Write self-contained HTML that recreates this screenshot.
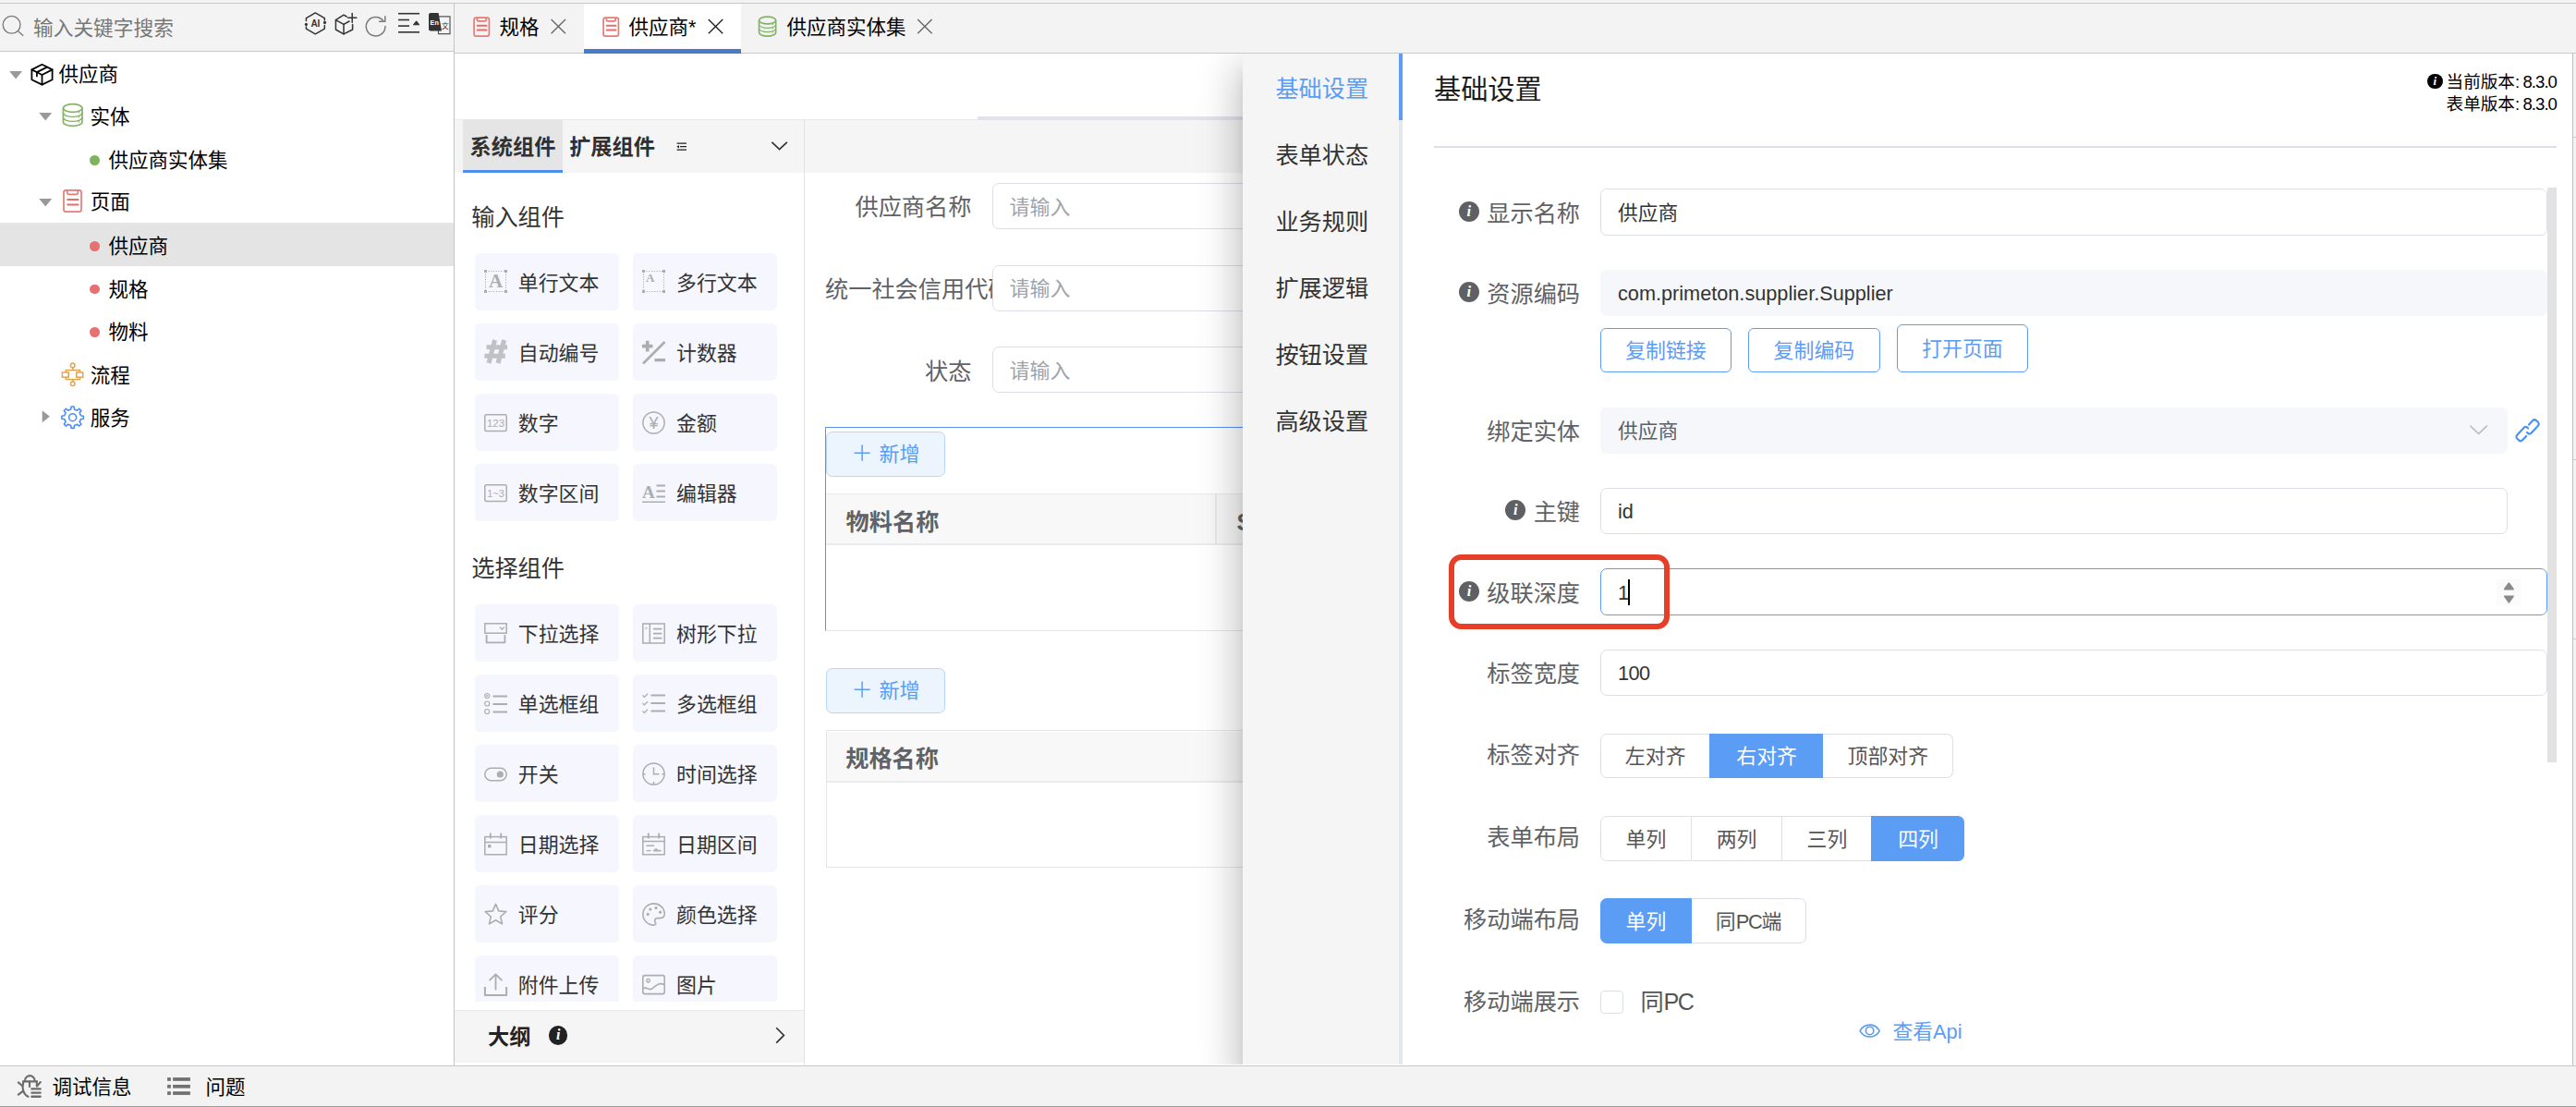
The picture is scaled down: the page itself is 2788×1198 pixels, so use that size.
<!DOCTYPE html>
<html lang="zh-CN">
<head>
<meta charset="utf-8">
<title>供应商</title>
<style>
*{box-sizing:border-box;margin:0;padding:0}
html,body{width:2788px;height:1198px;overflow:hidden;background:#fff}
body{position:relative;font-family:"Liberation Sans","Noto Sans CJK SC",sans-serif;font-size:21.5px;color:#000}
.a{position:absolute}
.t{position:absolute;white-space:nowrap}
svg{position:absolute;overflow:visible}
.card{position:absolute;width:156px;height:62px;background:#f5f6fe;border-radius:5.5px}
.inp{position:absolute;border:1.4px solid #dcdfe6;border-radius:7px;background:#fff}
.btn{position:absolute;border:1.5px solid #5b9cf5;border-radius:6px;background:#fff}
.seg{position:absolute;border:1.4px solid #dcdfe6;border-left-width:0;background:#fff}
.seg.f{border-left-width:1.4px;border-radius:7px 0 0 7px}
.seg.l{border-radius:0 7px 7px 0}
.seg.on{background:#5b9cf5;border-color:#5b9cf5}
.info{position:absolute;border-radius:50%;color:#fff;font-family:"Liberation Serif",serif;font-style:italic;font-weight:bold;text-align:center}
</style>
</head>
<body>
<!-- top strip -->
<div class="a" style="left:0;top:0;width:2788px;height:4px;background:#f3f3f3;border-bottom:1px solid #c8c8c8"></div>
<!-- left panel frame -->
<div class="a" style="left:0;top:4px;width:491px;height:52px;background:#f3f3f3;border-bottom:1px solid #c8c8c8"></div>
<div class="a" style="left:491px;top:4px;width:1px;height:1149px;background:#c4c4c4"></div>
<!-- tab bar -->
<div class="a" style="left:492px;top:4px;width:2296px;height:54px;background:#f3f3f3;border-bottom:1px solid #c8c8c8"></div>
<svg style="left:0px;top:0px;width:492px;height:56px;" viewBox="0 0 492 56" fill="none"><circle cx="12.6" cy="26.8" r="9.4" stroke="#7a7a7a" stroke-width="1.35"/><path d="M19.4 33.6L25.2 38.8" stroke="#7a7a7a" stroke-width="1.35"/><g stroke="#333" stroke-width="1.5" stroke-linecap="round" stroke-linejoin="round"><path d="M331.4 22.6V19.6L341.3 13.9L351.3 19.6V22"/><path d="M351.3 27.6V31.1L341.3 36.8L331.4 31.1V29"/></g><circle cx="331.4" cy="26.4" r="1.6" fill="#333"/><circle cx="351.5" cy="24.4" r="1.6" fill="#333"/><text x="341.4" y="29" font-size="10" font-weight="bold" fill="#333" text-anchor="middle" font-family="Liberation Sans,sans-serif">AI</text><g stroke="#333" stroke-width="1.5" stroke-linecap="round" stroke-linejoin="round"><path d="M375.2 18L372 16.2L363.4 21.6V32L372 36.8L381.6 32V26.6"/><path d="M363.4 21.6L372 26.4L378 23"/><path d="M372 26.4V36.8"/><path d="M376.6 19.2H385.8"/><path d="M381.2 14.4V24.2"/></g><g stroke="#7a7a7a" stroke-width="1.5" stroke-linecap="round" stroke-linejoin="round"><path d="M416.9 28.5A10.3 10.3 0 1 1 414.6 22.2"/><path d="M416.8 17.8V23.2H410.6"/></g><g stroke="#333" stroke-width="1.6"><path d="M431 14.7H454"/><path d="M431 21.5H443"/><path d="M431 28.1H443"/><path d="M431 34.8H454"/></g><path d="M447.4 26.8L450.6 22.8L453.8 26.8Z" fill="#333" stroke="#333" stroke-width="1" stroke-linejoin="round"/><path d="M474.5 17.8H487V36.6H474.5Z" stroke="#555" stroke-width="1.2" fill="#f3f3f3"/><path d="M466 14H474.6L478 33.6H466A2 2 0 0 1 464 31.6V16A2 2 0 0 1 466 14Z" fill="#333"/><text x="470.2" y="26.6" font-size="7.2" font-weight="bold" fill="#fff" text-anchor="middle" font-family="Liberation Sans,sans-serif">En</text><text x="481.8" y="30.6" font-size="7.6" fill="#333" text-anchor="middle" font-family="Noto Sans CJK SC,sans-serif">文</text></svg>
<div class="t " style="top:16.20px;font-size:21.7px;line-height:30px;height:30px;left:36.00px;color:#777;">输入关键字搜索</div>
<div class="a" style="left:0px;top:241.2px;width:491px;height:46.4px;background:#e4e4e4"></div>
<svg style="left:0px;top:56px;width:492px;height:440px;" viewBox="0 56 492 440" fill="none"><path d="M10.2 77h13.8l-6.9 8.4z" fill="#999"/><g stroke="#000" stroke-width="1.75" stroke-linejoin="round" stroke-linecap="round"><path d="M45.5 69.8L56.6 75.4V86.2L45.5 91.6L34.4 86.2V75.4Z"/><path d="M34.4 75.4L45.5 81L56.6 75.4"/><path d="M45.5 81V91.6"/><path d="M51 72.6L39.9 78.1V82.4"/></g><path d="M42.3 122h13.8l-6.9 8.4z" fill="#999"/><g transform="translate(78.7 112.2) scale(1) translate(-78.7 -112.2)"><g stroke="#82b366" stroke-width="1.65"><ellipse cx="78.7" cy="117.0" rx="10.3" ry="4.4"/><path d="M68.4 117.0V132.0A10.3 4.4 0 0 0 89.0 132.0V117.0"/><path d="M68.4 122.0A10.3 4.4 0 0 0 89.0 122.0" stroke-width="1.32"/><path d="M68.4 127.0A10.3 4.4 0 0 0 89.0 127.0" stroke-width="1.32"/></g><circle cx="85.3" cy="121.8" r="0.8" fill="#82b366"/><circle cx="85.3" cy="126.8" r="0.8" fill="#82b366"/><circle cx="85.3" cy="131.8" r="0.8" fill="#82b366"/></g><path d="M42.3 215h13.8l-6.9 8.4z" fill="#999"/><g transform="translate(68.2 205.1) scale(1) translate(-68.2 -205.1)"><rect x="69.0" y="205.9" width="19" height="23.2" rx="2.4" stroke="#e87a76" stroke-width="1.70"/><path d="M72.8 205.9V208.7A1.6 1.6 0 0 0 74.4 210.29999999999998H82.60000000000001A1.6 1.6 0 0 0 84.2 208.7V205.9" stroke="#e87a76" stroke-width="1.70"/><path d="M73.2 216.1H84.6M73.2 221.6H84.6" stroke="#e86c68" stroke-width="2.00" stroke-linecap="round"/></g><g stroke="#dea550" stroke-width="1.5"><circle cx="78.7" cy="395.4" r="2.3"/><circle cx="78.7" cy="415.3" r="2.3"/><path d="M78.7 397.7V400.6M78.7 413V410.6"/><rect x="71.3" y="400.6" width="15.2" height="10"/><rect x="67.4" y="403" width="6.8" height="5.2" fill="#fff"/><rect x="82.8" y="403" width="6.9" height="5.2" fill="#fff"/></g><path d="M45.7 444.2v13l8.2 -6.5z" fill="#999"/><path d="M76.71 442.90 L77.12 439.99 L80.08 439.99 L80.49 442.90 L83.48 444.14 L85.83 442.38 L87.92 444.47 L86.16 446.82 L87.40 449.81 L90.31 450.22 L90.31 453.18 L87.40 453.59 L86.16 456.58 L87.92 458.93 L85.83 461.02 L83.48 459.26 L80.49 460.50 L80.08 463.41 L77.12 463.41 L76.71 460.50 L73.72 459.26 L71.37 461.02 L69.28 458.93 L71.04 456.58 L69.80 453.59 L66.89 453.18 L66.89 450.22 L69.80 449.81 L71.04 446.82 L69.28 444.47 L71.37 442.38 L73.72 444.14Z" stroke="#4b8ef5" stroke-width="1.6" stroke-linejoin="round"/><circle cx="78.6" cy="451.7" r="4" stroke="#4b8ef5" stroke-width="1.6"/></svg>
<div class="a" style="left:97px;top:168.0px;width:10.8px;height:10.8px;border-radius:50%;background:#7fb45e"></div>
<div class="a" style="left:97px;top:261.0px;width:10.8px;height:10.8px;border-radius:50%;background:#e87070"></div>
<div class="a" style="left:97px;top:307.5px;width:10.8px;height:10.8px;border-radius:50%;background:#e87070"></div>
<div class="a" style="left:97px;top:354.0px;width:10.8px;height:10.8px;border-radius:50%;background:#e87070"></div>
<div class="t " style="top:66.20px;font-size:21.5px;line-height:30px;height:30px;left:63.60px;">供应商</div>
<div class="t " style="top:111.70px;font-size:21.5px;line-height:30px;height:30px;left:97.60px;">实体</div>
<div class="t " style="top:158.70px;font-size:21.5px;line-height:30px;height:30px;left:117.40px;">供应商实体集</div>
<div class="t " style="top:204.20px;font-size:21.5px;line-height:30px;height:30px;left:97.80px;">页面</div>
<div class="t " style="top:251.60px;font-size:21.5px;line-height:30px;height:30px;left:117.40px;">供应商</div>
<div class="t " style="top:298.70px;font-size:21.5px;line-height:30px;height:30px;left:117.40px;">规格</div>
<div class="t " style="top:345.20px;font-size:21.5px;line-height:30px;height:30px;left:117.40px;">物料</div>
<div class="t " style="top:391.70px;font-size:21.5px;line-height:30px;height:30px;left:97.80px;">流程</div>
<div class="t " style="top:438.20px;font-size:21.5px;line-height:30px;height:30px;left:97.80px;">服务</div>
<div class="a" style="left:632px;top:4px;width:170px;height:53.5px;background:#fff"></div>
<div class="a" style="left:632px;top:53px;width:170px;height:4.5px;background:#4a7bc8"></div>
<svg style="left:492px;top:4px;width:560px;height:54px;" viewBox="492 4 560 54" fill="none"><g transform="translate(512.4 18.4) scale(0.86) translate(-512.4 -18.4)"><rect x="513.1999999999999" y="19.2" width="19" height="23.2" rx="2.4" stroke="#e87a76" stroke-width="1.98"/><path d="M517.0 19.2V22.0A1.6 1.6 0 0 0 518.6 23.599999999999998H526.8A1.6 1.6 0 0 0 528.4 22.0V19.2" stroke="#e87a76" stroke-width="1.98"/><path d="M517.4 29.4H528.8M517.4 34.9H528.8" stroke="#e86c68" stroke-width="2.33" stroke-linecap="round"/></g><path d="M596.6 20.900000000000002L612.0 36.300000000000004M612.0 20.900000000000002L596.6 36.300000000000004" stroke="#666" stroke-width="1.35"/><g transform="translate(652.4 18.4) scale(0.86) translate(-652.4 -18.4)"><rect x="653.1999999999999" y="19.2" width="19" height="23.2" rx="2.4" stroke="#e87a76" stroke-width="1.98"/><path d="M657.0 19.2V22.0A1.6 1.6 0 0 0 658.6 23.599999999999998H666.8A1.6 1.6 0 0 0 668.4 22.0V19.2" stroke="#e87a76" stroke-width="1.98"/><path d="M657.4 29.4H668.8M657.4 34.9H668.8" stroke="#e86c68" stroke-width="2.33" stroke-linecap="round"/></g><path d="M766.8 20.900000000000002L782.1999999999999 36.300000000000004M782.1999999999999 20.900000000000002L766.8 36.300000000000004" stroke="#222" stroke-width="1.35"/><g transform="translate(830.6 17.8) scale(0.88) translate(-830.6 -17.8)"><g stroke="#82b366" stroke-width="1.88"><ellipse cx="830.6" cy="22.6" rx="10.3" ry="4.4"/><path d="M820.3000000000001 22.6V37.6A10.3 4.4 0 0 0 840.9 37.6V22.6"/><path d="M820.3000000000001 27.6A10.3 4.4 0 0 0 840.9 27.6" stroke-width="1.32"/><path d="M820.3000000000001 32.6A10.3 4.4 0 0 0 840.9 32.6" stroke-width="1.32"/></g><circle cx="837.2" cy="27.4" r="0.8" fill="#82b366"/><circle cx="837.2" cy="32.4" r="0.8" fill="#82b366"/><circle cx="837.2" cy="37.400000000000006" r="0.8" fill="#82b366"/></g><path d="M993.2 20.900000000000002L1008.6 36.300000000000004M1008.6 20.900000000000002L993.2 36.300000000000004" stroke="#666" stroke-width="1.35"/></svg>
<div class="t " style="top:14.60px;font-size:21.5px;line-height:30px;height:30px;left:540.40px;">规格</div>
<div class="t " style="top:14.60px;font-size:21.5px;line-height:30px;height:30px;left:680.60px;">供应商*</div>
<div class="t " style="top:14.60px;font-size:21.5px;line-height:30px;height:30px;left:851.40px;">供应商实体集</div>
<div class="a" style="left:492px;top:129px;width:860px;height:58px;background:#f5f5f5;border-top:1px solid #ece6e9"></div>
<div class="a" style="left:1058px;top:126px;width:300px;height:4px;background:#e1e3ea"></div>
<div class="a" style="left:870px;top:129px;width:1.2px;height:1024px;background:#e2e2e2"></div>
<div class="a" style="left:501px;top:129.5px;width:108px;height:57.5px;background:#e5e5e5;border-bottom:3.4px solid #4b8ef0"></div>
<div class="t " style="top:143.80px;font-size:23.2px;line-height:30px;height:30px;left:508.60px;color:#303030;font-weight:bold;">系统组件</div>
<div class="t " style="top:143.80px;font-size:23.2px;line-height:30px;height:30px;left:616.20px;color:#303030;font-weight:bold;">扩展组件</div>
<svg style="left:492px;top:129px;width:380px;height:58px;" viewBox="492 129 380 58" fill="none"><g stroke="#222" stroke-width="1.3"><path d="M732.6 155.2H743M736 158.7H743M732.6 162.2H743"/></g><path d="M732.4 158.7L735 157V160.4Z" fill="#222"/><path d="M835.4 153.8L843.6 161.6L851.8 153.8" stroke="#333" stroke-width="1.7"/></svg>
<div class="t " style="top:220.00px;font-size:25.2px;line-height:30px;height:30px;left:510.20px;color:#333;">输入组件</div>
<div class="t " style="top:600.00px;font-size:25.2px;line-height:30px;height:30px;left:510.20px;color:#333;">选择组件</div>
<div class="card" style="left:514px;top:274px;height:62px;overflow:hidden"><svg viewBox="0 0 25 25" fill="none" style="left:10px;top:19px;width:25px;height:25px"><rect x="1.5" y="0.5" width="22" height="22" stroke="#adadad" stroke-width="1" stroke-dasharray="1.2 1.6"/><rect x="0" y="-1" width="3" height="3" fill="#adadad"/><rect x="22" y="-1" width="3" height="3" fill="#adadad"/><rect x="0" y="21" width="3" height="3" fill="#adadad"/><rect x="22" y="21" width="3" height="3" fill="#adadad"/><text x="12.5" y="18.2" font-family="Liberation Serif,serif" font-size="21" font-weight="bold" text-anchor="middle" fill="#adadad">A</text></svg><div class="t " style="top:17.80px;font-size:21.9px;line-height:30px;height:30px;left:46.80px;color:#333;">单行文本</div>
</div>
<div class="card" style="left:685.2px;top:274px;height:62px;overflow:hidden"><svg viewBox="0 0 25 25" fill="none" style="left:10px;top:19px;width:25px;height:25px"><rect x="1.5" y="0.5" width="22" height="22" stroke="#adadad" stroke-width="1" stroke-dasharray="1.2 1.6"/><rect x="0" y="-1" width="3" height="3" fill="#adadad"/><rect x="22" y="-1" width="3" height="3" fill="#adadad"/><rect x="0" y="21" width="3" height="3" fill="#adadad"/><rect x="22" y="21" width="3" height="3" fill="#adadad"/><text x="8.8" y="12.4" font-family="Liberation Serif,serif" font-size="13" font-weight="bold" text-anchor="middle" fill="#adadad">A</text></svg><div class="t " style="top:17.80px;font-size:21.9px;line-height:30px;height:30px;left:46.80px;color:#333;">多行文本</div>
</div>
<div class="card" style="left:514px;top:350px;height:62px;overflow:hidden"><svg viewBox="0 0 25 25" fill="none" style="left:10px;top:19px;width:25px;height:25px"><g stroke="#c0c1c5" stroke-width="5"><path d="M11.6 -1L5 24M21.6 -1L15 24"/><path d="M2.6 6.8H25M0.4 16.2H22.8"/></g></svg><div class="t " style="top:17.80px;font-size:21.9px;line-height:30px;height:30px;left:46.80px;color:#333;">自动编号</div>
</div>
<div class="card" style="left:685.2px;top:350px;height:62px;overflow:hidden"><svg viewBox="0 0 25 25" fill="none" style="left:10px;top:19px;width:25px;height:25px"><g stroke="#adadad"><path d="M0 5.6H11.4M5.7 -0.2V11.4" stroke-width="3.6"/><path d="M1 24.5L24.5 1" stroke-width="2.6"/><path d="M13.5 20.6H25" stroke-width="3.4"/></g></svg><div class="t " style="top:17.80px;font-size:21.9px;line-height:30px;height:30px;left:46.80px;color:#333;">计数器</div>
</div>
<div class="card" style="left:514px;top:426px;height:62px;overflow:hidden"><svg viewBox="0 0 25 25" fill="none" style="left:10px;top:19px;width:25px;height:25px"><rect x="0.8" y="3.8" width="23.4" height="17.8" rx="1.5" stroke="#adadad" stroke-width="1.5"/><text x="12.5" y="16.8" font-family="Liberation Sans,sans-serif" font-size="11.5" text-anchor="middle" fill="#adadad">123</text></svg><div class="t " style="top:17.80px;font-size:21.9px;line-height:30px;height:30px;left:46.80px;color:#333;">数字</div>
</div>
<div class="card" style="left:685.2px;top:426px;height:62px;overflow:hidden"><svg viewBox="0 0 25 25" fill="none" style="left:10px;top:19px;width:25px;height:25px"><circle cx="12.5" cy="12.5" r="11.6" stroke="#adadad" stroke-width="1.5"/><text x="12.5" y="19" font-family="Liberation Sans,sans-serif" font-size="18" text-anchor="middle" fill="#adadad">¥</text></svg><div class="t " style="top:17.80px;font-size:21.9px;line-height:30px;height:30px;left:46.80px;color:#333;">金额</div>
</div>
<div class="card" style="left:514px;top:502px;height:62px;overflow:hidden"><svg viewBox="0 0 25 25" fill="none" style="left:10px;top:19px;width:25px;height:25px"><rect x="0.8" y="3.8" width="23.4" height="17.8" rx="1.5" stroke="#adadad" stroke-width="1.5"/><text x="12.5" y="16.6" font-family="Liberation Sans,sans-serif" font-size="11" text-anchor="middle" fill="#adadad">1~3</text></svg><div class="t " style="top:17.80px;font-size:21.9px;line-height:30px;height:30px;left:46.80px;color:#333;">数字区间</div>
</div>
<div class="card" style="left:685.2px;top:502px;height:62px;overflow:hidden"><svg viewBox="0 0 25 25" fill="none" style="left:10px;top:19px;width:25px;height:25px"><text x="6.8" y="17.6" font-family="Liberation Serif,serif" font-size="19" font-weight="bold" text-anchor="middle" fill="#adadad">A</text><g stroke="#adadad"><path d="M0 22.2H25" stroke-width="1.6"/><path d="M15.5 4.6H25M15.5 10.6H25M15.5 16.6H25" stroke-width="2"/></g></svg><div class="t " style="top:17.80px;font-size:21.9px;line-height:30px;height:30px;left:46.80px;color:#333;">编辑器</div>
</div>
<div class="card" style="left:514px;top:654px;height:62px;overflow:hidden"><svg viewBox="0 0 25 25" fill="none" style="left:10px;top:19px;width:25px;height:25px"><g stroke="#adadad" stroke-width="1.5"><rect x="0.8" y="1.8" width="23.4" height="10.4"/><path d="M16.8 5.4L19.4 8.2L22 5.4" stroke-width="1.3"/><path d="M2.6 14V22.4H22.4V14" stroke-width="1.8"/></g></svg><div class="t " style="top:17.80px;font-size:21.9px;line-height:30px;height:30px;left:46.80px;color:#333;">下拉选择</div>
</div>
<div class="card" style="left:685.2px;top:654px;height:62px;overflow:hidden"><svg viewBox="0 0 25 25" fill="none" style="left:10px;top:19px;width:25px;height:25px"><g stroke="#adadad" stroke-width="1.5"><rect x="0.8" y="2" width="23.4" height="21"/><path d="M8.3 2V23"/><path d="M12 7.6H21.4M12 12.6H21.4M12 17.6H21.4" stroke-width="1.8"/></g><path d="M3.6 5.4L5.8 6.8L3.6 8.2Z" fill="#adadad"/></svg><div class="t " style="top:17.80px;font-size:21.9px;line-height:30px;height:30px;left:46.80px;color:#333;">树形下拉</div>
</div>
<div class="card" style="left:514px;top:730px;height:62px;overflow:hidden"><svg viewBox="0 0 25 25" fill="none" style="left:10px;top:19px;width:25px;height:25px"><g stroke="#adadad"><circle cx="3.2" cy="4" r="2.5" stroke-width="1.2"/><circle cx="3.2" cy="12.5" r="2.5" stroke-width="1.2"/><circle cx="3.2" cy="21" r="2.5" stroke-width="1.2"/><path d="M9.5 4.6H25M9.5 13H25M9.5 21.5H25" stroke-width="2"/></g><circle cx="3.2" cy="4" r="1" fill="#adadad"/></svg><div class="t " style="top:17.80px;font-size:21.9px;line-height:30px;height:30px;left:46.80px;color:#333;">单选框组</div>
</div>
<div class="card" style="left:685.2px;top:730px;height:62px;overflow:hidden"><svg viewBox="0 0 25 25" fill="none" style="left:10px;top:19px;width:25px;height:25px"><g stroke="#adadad"><path d="M0.5 3.5L2.4 5.4L6 1.8M0.5 12L2.4 13.9L6 10.3M0.5 20.5L2.4 22.4L6 18.8" stroke-width="1.3"/><path d="M9.5 3.4H25M9.5 12H25M9.5 20.6H25" stroke-width="2"/></g></svg><div class="t " style="top:17.80px;font-size:21.9px;line-height:30px;height:30px;left:46.80px;color:#333;">多选框组</div>
</div>
<div class="card" style="left:514px;top:806px;height:62px;overflow:hidden"><svg viewBox="0 0 25 25" fill="none" style="left:10px;top:19px;width:25px;height:25px"><rect x="0.8" y="6.3" width="23.4" height="13.4" rx="6.7" stroke="#adadad" stroke-width="1.5"/><circle cx="17.3" cy="13" r="3.6" fill="#adadad"/></svg><div class="t " style="top:17.80px;font-size:21.9px;line-height:30px;height:30px;left:46.80px;color:#333;">开关</div>
</div>
<div class="card" style="left:685.2px;top:806px;height:62px;overflow:hidden"><svg viewBox="0 0 25 25" fill="none" style="left:10px;top:19px;width:25px;height:25px"><g stroke="#adadad" stroke-width="1.5"><circle cx="12.5" cy="12.5" r="11.6"/><path d="M12.5 5.4V12.8H18.4"/><path d="M12.5 21V24M1 12.8H3.6M21.4 12.8H24"/></g></svg><div class="t " style="top:17.80px;font-size:21.9px;line-height:30px;height:30px;left:46.80px;color:#333;">时间选择</div>
</div>
<div class="card" style="left:514px;top:882px;height:62px;overflow:hidden"><svg viewBox="0 0 25 25" fill="none" style="left:10px;top:19px;width:25px;height:25px"><g stroke="#adadad" stroke-width="1.5"><rect x="0.8" y="4.6" width="23.4" height="19.2"/><path d="M0.8 10.4H24.2"/><path d="M6.8 0.6V6.4M18.2 0.6V6.4" stroke-width="1.8"/></g><rect x="4" y="13" width="3.4" height="3.4" fill="#adadad"/></svg><div class="t " style="top:17.80px;font-size:21.9px;line-height:30px;height:30px;left:46.80px;color:#333;">日期选择</div>
</div>
<div class="card" style="left:685.2px;top:882px;height:62px;overflow:hidden"><svg viewBox="0 0 25 25" fill="none" style="left:10px;top:19px;width:25px;height:25px"><g stroke="#adadad" stroke-width="1.5"><rect x="0.8" y="4.6" width="23.4" height="19.2"/><path d="M0.8 9.6H24.2"/><path d="M6.8 0.6V6.4M18.2 0.6V6.4" stroke-width="1.8"/><path d="M4.5 14.2H13M12 19.6H20.5" stroke-width="1.6"/><path d="M4.5 19.6H9.5" stroke-width="1.2"/></g><rect x="13.5" y="17.4" width="3" height="2.4" fill="#adadad"/></svg><div class="t " style="top:17.80px;font-size:21.9px;line-height:30px;height:30px;left:46.80px;color:#333;">日期区间</div>
</div>
<div class="card" style="left:514px;top:958px;height:62px;overflow:hidden"><svg viewBox="0 0 25 25" fill="none" style="left:10px;top:19px;width:25px;height:25px"><path d="M12.5 1.4L15.7 8.9L23.8 9.6L17.7 15L19.5 22.9L12.5 18.7L5.5 22.9L7.3 15L1.2 9.6L9.3 8.9Z" stroke="#adadad" stroke-width="1.6" stroke-linejoin="round"/></svg><div class="t " style="top:17.80px;font-size:21.9px;line-height:30px;height:30px;left:46.80px;color:#333;">评分</div>
</div>
<div class="card" style="left:685.2px;top:958px;height:62px;overflow:hidden"><svg viewBox="0 0 25 25" fill="none" style="left:10px;top:19px;width:25px;height:25px"><path d="M12.5 0.9A11.6 11.6 0 1 0 12.5 24.1C14.6 24.1 15.3 22.3 14.2 20.9C12.8 19.1 13.9 16.6 16.4 16.6H19.6C22.4 16.6 24.2 14.6 24.2 12C24.2 5.6 19 0.9 12.5 0.9Z" stroke="#adadad" stroke-width="1.6"/><circle cx="6.2" cy="12.4" r="1.6" fill="#adadad"/><circle cx="8.8" cy="7" r="1.6" fill="#adadad"/><circle cx="15" cy="5.6" r="1.6" fill="#adadad"/><circle cx="19.6" cy="10.2" r="1.6" fill="#adadad"/></svg><div class="t " style="top:17.80px;font-size:21.9px;line-height:30px;height:30px;left:46.80px;color:#333;">颜色选择</div>
</div>
<div class="card" style="left:514px;top:1034px;height:49.59999999999991px;overflow:hidden;border-radius:5.5px 5.5px 0 0"><svg viewBox="0 0 25 25" fill="none" style="left:10px;top:19px;width:25px;height:25px"><g stroke="#adadad" stroke-width="1.8" stroke-linejoin="round"><path d="M0.9 15V24H24.1V15" stroke-width="2"/><path d="M12.5 18.6V1.6M5.6 8.2L12.5 1.4L19.4 8.2"/></g></svg><div class="t " style="top:17.80px;font-size:21.9px;line-height:30px;height:30px;left:46.80px;color:#333;">附件上传</div>
</div>
<div class="card" style="left:685.2px;top:1034px;height:49.59999999999991px;overflow:hidden;border-radius:5.5px 5.5px 0 0"><svg viewBox="0 0 25 25" fill="none" style="left:10px;top:19px;width:25px;height:25px"><g stroke="#adadad" stroke-width="1.6"><rect x="0.8" y="2.6" width="23.4" height="20" rx="2"/><circle cx="6.6" cy="8.2" r="1.8" stroke-width="1.3"/><path d="M1 16.8C5 14 7 19.4 10.4 17.2C14.4 14.6 17.4 9.6 24 12.4"/></g></svg><div class="t " style="top:17.80px;font-size:21.9px;line-height:30px;height:30px;left:46.80px;color:#333;">图片</div>
</div>
<div class="a" style="left:492px;top:1093px;width:378px;height:56.5px;background:#f5f5f5;border-top:1px solid #e6eaee"></div>
<div class="t " style="top:1107.40px;font-size:23.2px;line-height:30px;height:30px;left:528.00px;color:#222;font-weight:bold;">大纲</div>
<div class="info" style="left:594px;top:1110.4px;width:20.4px;height:20.4px;line-height:20.4px;font-size:16px;background:#222">i</div>
<svg style="left:835px;top:1108px;width:20px;height:26px;" viewBox="835 1108 20 26" fill="none"><path d="M840.2 1112.2L848.4 1120.4L840.2 1128.6" stroke="#333" stroke-width="1.6"/></svg>
<div class="t " style="top:209.20px;font-size:25.2px;line-height:30px;height:30px;right:1736.60px;color:#606266;">供应商名称</div>
<div class="a" style="left:893px;top:290px;width:181px;height:44px;overflow:hidden"><div class="t " style="top:8.20px;font-size:25.2px;line-height:30px;height:30px;left:0.00px;color:#606266;">统一社会信用代码</div>
</div>
<div class="t " style="top:386.80px;font-size:25.2px;line-height:30px;height:30px;right:1736.60px;color:#606266;">状态</div>
<div class="a" style="left:1074px;top:198.4px;width:300px;height:49.4px;border:1.5px solid #dcdfe6;border-radius:7px;background:#fff"></div>
<div class="t " style="top:209.70px;font-size:21.9px;line-height:30px;height:30px;left:1092.60px;color:#a0a3a9;">请输入</div>
<div class="a" style="left:1074px;top:286.6px;width:300px;height:50px;border:1.5px solid #dcdfe6;border-radius:7px;background:#fff"></div>
<div class="t " style="top:298.20px;font-size:21.9px;line-height:30px;height:30px;left:1092.60px;color:#a0a3a9;">请输入</div>
<div class="a" style="left:1074px;top:375.4px;width:300px;height:49.4px;border:1.5px solid #dcdfe6;border-radius:7px;background:#fff"></div>
<div class="t " style="top:386.70px;font-size:21.9px;line-height:30px;height:30px;left:1092.60px;color:#a0a3a9;">请输入</div>
<div class="a" style="left:893px;top:462px;width:460px;height:220.5px;border-top:1.5px solid #5b8ff9;border-left:1.5px solid #5b8ff9;border-bottom:1.5px solid #e6e6e6"></div>
<div class="a" style="left:894px;top:467.2px;width:129px;height:48.4px;background:#ecf4fe;border:1.3px solid #b8d6fb;border-radius:6.5px"></div>
<svg style="left:920px;top:477.2px;width:30px;height:30px;" viewBox="920 477.2 30 30" fill="none"><path d="M924.6 490.4H941.6M933.1 481.8V499.0" stroke="#5b9cf5" stroke-width="1.5"/></svg>
<div class="t " style="top:476.70px;font-size:22px;line-height:30px;height:30px;left:951.60px;color:#5b9cf5;">新增</div>
<div class="a" style="left:893.8px;top:534px;width:460px;height:56px;background:#f8f8f8;border-top:1.2px solid #ebebeb;border-bottom:2px solid #e9ebee"></div>
<div class="a" style="left:1315px;top:534px;width:1.5px;height:55px;background:#e8e8e8"></div>
<div class="t " style="top:550.10px;font-size:25.2px;line-height:30px;height:30px;left:915.60px;color:#606266;font-weight:bold;">物料名称</div>
<div class="t " style="top:550.10px;font-size:25.2px;line-height:30px;height:30px;left:1338.60px;color:#606266;font-weight:bold;">S</div>
<div class="a" style="left:894px;top:723.4px;width:129px;height:48.4px;background:#ecf4fe;border:1.3px solid #b8d6fb;border-radius:6.5px"></div>
<svg style="left:920px;top:733.4px;width:30px;height:30px;" viewBox="920 733.4 30 30" fill="none"><path d="M924.6 746.6H941.6M933.1 738.0V755.1999999999999" stroke="#5b9cf5" stroke-width="1.5"/></svg>
<div class="t " style="top:732.90px;font-size:22px;line-height:30px;height:30px;left:951.60px;color:#5b9cf5;">新增</div>
<div class="a" style="left:894px;top:790.4px;width:460px;height:148.4px;border:1.3px solid #e6e6e6;border-right:0"></div>
<div class="a" style="left:895px;top:791.5px;width:460px;height:55.6px;background:#f8f8f8;border-bottom:2px solid #e9ebee"></div>
<div class="t " style="top:806.00px;font-size:25.2px;line-height:30px;height:30px;left:915.20px;color:#606266;font-weight:bold;">规格名称</div>
<div class="a" style="left:1200px;top:57.6px;width:1588px;height:1094.6px;overflow:hidden;pointer-events:none"><div class="a" style="left:145px;top:0;width:1439px;height:1100px;background:#fff;box-shadow:0 12.4px 15.5px -7.75px rgba(0,0,0,.2),0 24.8px 37.2px 3.1px rgba(0,0,0,.14),0 9.3px 46.5px 7.75px rgba(0,0,0,.12)"></div></div>
<div class="a" style="left:2784px;top:58px;width:4px;height:1095px;background:#f3f3f3;border-left:1.2px solid #c0c0c0"></div>
<div class="a" style="left:2785px;top:148px;width:3px;height:1.2px;background:#c8c8c8"></div>
<div class="a" style="left:2785px;top:497px;width:3px;height:1.2px;background:#c8c8c8"></div>
<div class="a" style="left:2785px;top:691px;width:3px;height:1.2px;background:#c8c8c8"></div>
<div class="a" style="left:1345px;top:58px;width:169px;height:1094.4px;background:#f5f5f5"></div>
<div class="a" style="left:1514px;top:58px;width:4px;height:1094.4px;background:#e4e7ed"></div>
<div class="a" style="left:1514px;top:58px;width:4px;height:72px;background:#5b9cf5"></div>
<div class="t " style="top:80.70px;font-size:25.2px;line-height:30px;height:30px;left:1380.40px;color:#5b9cf5;">基础设置</div>
<div class="t " style="top:152.80px;font-size:25.2px;line-height:30px;height:30px;left:1380.40px;color:#333;">表单状态</div>
<div class="t " style="top:224.90px;font-size:25.2px;line-height:30px;height:30px;left:1380.40px;color:#333;">业务规则</div>
<div class="t " style="top:297.00px;font-size:25.2px;line-height:30px;height:30px;left:1380.40px;color:#333;">扩展逻辑</div>
<div class="t " style="top:369.10px;font-size:25.2px;line-height:30px;height:30px;left:1380.40px;color:#333;">按钮设置</div>
<div class="t " style="top:441.20px;font-size:25.2px;line-height:30px;height:30px;left:1380.40px;color:#333;">高级设置</div>
<div class="t " style="top:77.10px;font-size:29.2px;line-height:40px;height:40px;left:1552.00px;color:#1c1c1c;">基础设置</div>
<div class="info" style="left:2627.2px;top:80.0px;width:16.4px;height:16.4px;line-height:16.4px;font-size:13px;background:#000">i</div>
<div class="t " style="top:76.80px;font-size:18.6px;line-height:24px;height:24px;right:21.00px;color:#000;">当前版本<span style="letter-spacing:-0.95px">: 8.3.0</span></div>
<div class="t " style="top:100.80px;font-size:18.6px;line-height:24px;height:24px;right:21.00px;color:#000;">表单版本<span style="letter-spacing:-0.95px">: 8.3.0</span></div>
<div class="a" style="left:1552px;top:157.8px;width:1215px;height:2.2px;background:#dcdfe6"></div>
<div class="a" style="left:2757.4px;top:203px;width:9.6px;height:621.5px;background:#e2e2e2"></div>
<div class="t " style="top:215.60px;font-size:25.2px;line-height:30px;height:30px;right:1078.00px;color:#606266;">显示名称</div>
<div class="info" style="left:1578.8px;top:217.5px;width:22px;height:22px;line-height:22px;font-size:16.5px;background:#5f6063">i</div>
<div class="inp" style="left:1732.2px;top:204.4px;width:1024.4px;height:50.2px;border-color:#dcdfe6;"></div>
<div class="t " style="top:215.90px;font-size:21.7px;line-height:30px;height:30px;left:1751.00px;color:#333;">供应商</div>
<div class="t " style="top:303.00px;font-size:25.2px;line-height:30px;height:30px;right:1078.00px;color:#606266;">资源编码</div>
<div class="info" style="left:1578.8px;top:304.9px;width:22px;height:22px;line-height:22px;font-size:16.5px;background:#5f6063">i</div>
<div class="inp" style="left:1732.2px;top:292.2px;width:1024.4px;height:49.4px;background:#f5f7fa;border-color:#f5f7fa;"></div>
<div class="t " style="top:303.30px;font-size:21.7px;line-height:30px;height:30px;left:1751.00px;color:#333;">com.primeton.supplier.Supplier</div>
<div class="btn" style="left:1732.2px;top:355.2px;width:141.6px;height:47.6px"></div>
<div class="t " style="top:365.20px;font-size:21.9px;line-height:30px;height:30px;left:1732.20px;width:141.6px;text-align:center;color:#5b9cf5;">复制链接</div>
<div class="btn" style="left:1892px;top:355.2px;width:142.8px;height:47.6px"></div>
<div class="t " style="top:365.20px;font-size:21.9px;line-height:30px;height:30px;left:1892.00px;width:142.8px;text-align:center;color:#5b9cf5;">复制编码</div>
<div class="btn" style="left:2053.2px;top:351.2px;width:141.6px;height:51.6px"></div>
<div class="t " style="top:363.20px;font-size:21.9px;line-height:30px;height:30px;left:2053.20px;width:141.6px;text-align:center;color:#5b9cf5;">打开页面</div>
<div class="t " style="top:451.80px;font-size:25.2px;line-height:30px;height:30px;right:1078.00px;color:#606266;">绑定实体</div>
<div class="inp" style="left:1732.2px;top:441.3px;width:981.8px;height:49.4px;background:#f5f7fa;border-color:#f5f7fa;"></div>
<div class="t " style="top:452.40px;font-size:21.7px;line-height:30px;height:30px;left:1751.00px;color:#333;"><span style="color:#5c5f66">供应商</span></div>
<svg style="left:2660px;top:440px;width:100px;height:52px;" viewBox="2660 440 100 52" fill="none"><path d="M2673.3 460.6L2682.6 469.4L2691.9 460.6" stroke="#b9bcc3" stroke-width="1.5"/><g stroke="#4b93f7" stroke-width="2.2" stroke-linecap="round" fill="none"><path transform="translate(2730.8 469.6) rotate(-47)" d="M0.6 4.0H-5.3A2.8 2.8 0 0 1 -8.1 1.2000000000000002V-1.2000000000000002A2.8 2.8 0 0 1 -5.3 -4.0H5.3A2.8 2.8 0 0 1 8.1 -1.2000000000000002V-0.2"/><path transform="translate(2740.4 461.9) rotate(-47)" d="M-0.6 -4.0H5.3A2.8 2.8 0 0 1 8.1 -1.2000000000000002V1.2000000000000002A2.8 2.8 0 0 1 5.3 4.0H-5.3A2.8 2.8 0 0 1 -8.1 1.2000000000000002V0.2"/></g></svg>
<div class="t " style="top:539.20px;font-size:25.2px;line-height:30px;height:30px;right:1078.00px;color:#606266;">主键</div>
<div class="info" style="left:1629.4px;top:541.1px;width:22px;height:22px;line-height:22px;font-size:16.5px;background:#5f6063">i</div>
<div class="inp" style="left:1732.2px;top:528.3px;width:981.8px;height:49.4px;border-color:#dcdfe6;"></div>
<div class="t " style="top:539.40px;font-size:21.7px;line-height:30px;height:30px;left:1751.00px;color:#333;">id</div>
<div class="t " style="top:626.80px;font-size:25.2px;line-height:30px;height:30px;right:1078.00px;color:#606266;">级联深度</div>
<div class="info" style="left:1579.0px;top:628.7px;width:22px;height:22px;line-height:22px;font-size:16.5px;background:#5f6063">i</div>
<div class="inp" style="left:1732.2px;top:615.4px;width:1024.6px;height:50.4px;border-color:#5b9cf5;"></div>
<div class="t " style="top:627.00px;font-size:21.7px;line-height:30px;height:30px;left:1751.00px;color:#333;">1</div>
<div class="a" style="left:1762.2px;top:627.2px;width:2px;height:27.8px;background:#000"></div>
<div class="a" style="left:2702px;top:627.2px;width:26.9px;height:27.7px;background:#fbfbfb"></div>
<svg style="left:2700px;top:624px;width:32px;height:34px;" viewBox="2700 624 32 34" fill="none"><g fill="#8a8a8a" stroke="#8a8a8a" stroke-linejoin="round" stroke-width="1.8"><path d="M2710.8 637.6L2715.4 631.2L2720 637.6Z"/><path d="M2710.8 645.3L2715.4 651.8L2720 645.3Z"/></g></svg>
<div class="t " style="top:714.20px;font-size:25.2px;line-height:30px;height:30px;right:1078.00px;color:#606266;">标签宽度</div>
<div class="inp" style="left:1732.2px;top:703px;width:1024.6px;height:49.6px;border-color:#dcdfe6;"></div>
<div class="t " style="top:714.20px;font-size:21.7px;line-height:30px;height:30px;left:1751.00px;color:#333;"><span style="letter-spacing:-0.5px">100</span></div>
<div class="a" style="left:1567.5px;top:600px;width:239.5px;height:80.8px;border:6.4px solid #e73f27;border-radius:13.5px"></div>
<div class="t " style="top:801.80px;font-size:25.2px;line-height:30px;height:30px;right:1078.00px;color:#606266;">标签对齐</div>
<div class="seg f" style="left:1732.2px;top:794.2px;width:119.0px;height:47.6px"></div>
<div class="t " style="top:804.40px;font-size:21.9px;line-height:30px;height:30px;left:1732.20px;width:119.0px;text-align:center;color:#555;">左对齐</div>
<div class="seg on" style="left:1849.8px;top:794.2px;width:123.2px;height:47.6px"></div>
<div class="t " style="top:804.40px;font-size:21.9px;line-height:30px;height:30px;left:1851.20px;width:121.8px;text-align:center;color:#fff;">右对齐</div>
<div class="seg l" style="left:1973px;top:794.2px;width:140.6px;height:47.6px"></div>
<div class="t " style="top:804.40px;font-size:21.9px;line-height:30px;height:30px;left:1973.00px;width:140.6px;text-align:center;color:#555;">顶部对齐</div>
<div class="t " style="top:891.20px;font-size:25.2px;line-height:30px;height:30px;right:1078.00px;color:#606266;">表单布局</div>
<div class="seg f" style="left:1732.2px;top:883.2px;width:98.4px;height:48.4px"></div>
<div class="t " style="top:893.80px;font-size:21.9px;line-height:30px;height:30px;left:1732.20px;width:98.4px;text-align:center;color:#555;">单列</div>
<div class="seg" style="left:1830.6px;top:883.2px;width:98.0px;height:48.4px"></div>
<div class="t " style="top:893.80px;font-size:21.9px;line-height:30px;height:30px;left:1830.60px;width:98.0px;text-align:center;color:#555;">两列</div>
<div class="seg" style="left:1928.6px;top:883.2px;width:97.8px;height:48.4px"></div>
<div class="t " style="top:893.80px;font-size:21.9px;line-height:30px;height:30px;left:1928.60px;width:97.8px;text-align:center;color:#555;">三列</div>
<div class="seg l on" style="left:2025.0px;top:883.2px;width:100.8px;height:48.4px"></div>
<div class="t " style="top:893.80px;font-size:21.9px;line-height:30px;height:30px;left:2026.40px;width:99.4px;text-align:center;color:#fff;">四列</div>
<div class="t " style="top:980.40px;font-size:25.2px;line-height:30px;height:30px;right:1078.00px;color:#606266;">移动端布局</div>
<div class="seg f on" style="left:1732.2px;top:972px;width:98.4px;height:48.6px"></div>
<div class="t " style="top:982.70px;font-size:21.9px;line-height:30px;height:30px;left:1732.20px;width:98.4px;text-align:center;color:#fff;">单列</div>
<div class="seg l" style="left:1830.6px;top:972px;width:124.0px;height:48.6px"></div>
<div class="t " style="top:982.70px;font-size:21.9px;line-height:30px;height:30px;left:1830.60px;width:124.0px;text-align:center;color:#555;">同<span style="letter-spacing:-1.3px">PC</span>端</div>
<div class="t " style="top:1069.40px;font-size:25.2px;line-height:30px;height:30px;right:1078.00px;color:#606266;">移动端展示</div>
<div class="a" style="left:1732.2px;top:1072.4px;width:24.6px;height:24.4px;border:1.4px solid #dcdfe6;border-radius:4px;background:#fff"></div>
<div class="t " style="top:1069.20px;font-size:25.2px;line-height:30px;height:30px;left:1775.40px;color:#555;">同<span style="letter-spacing:-1.6px">PC</span></div>
<svg style="left:2008px;top:1100px;width:34px;height:32px;" viewBox="2008 1100 34 32" fill="none"><g stroke="#5b9cf5" stroke-width="1.6"><path d="M2013 1115.6C2018 1107 2029.2 1107 2034.2 1115.6C2029.2 1124.2 2018 1124.2 2013 1115.6Z"/><circle cx="2023.6" cy="1115.4" r="4.2"/></g></svg>
<div class="t " style="top:1101.60px;font-size:21.8px;line-height:30px;height:30px;left:2048.40px;color:#5b9cf5;">查看Api</div>

<!-- status bar -->
<div class="a" style="left:0;top:1152.7px;width:2788px;height:45.3px;background:#f3f3f3;border-top:1.4px solid #c8c8c8;border-bottom:1.4px solid #9c9c9c"></div>
<svg style="left:0px;top:1154px;width:300px;height:44px;" viewBox="0 1154 300 44" fill="none"><g stroke="#6c6c6c" stroke-width="2.1" stroke-linecap="round" stroke-linejoin="round" fill="none"><path d="M27 1169.4A5.3 5.3 0 0 1 37.6 1169.4"/><path d="M25 1170.4H40"/><path d="M25.4 1170.6C23.4 1177.4 25 1184.2 30.4 1186.8"/><path d="M32 1170.6V1176"/><path d="M39.8 1170.6V1175.4"/><path d="M19.8 1171.4L24.4 1175.2M19.8 1184.6L24.8 1180.8M43.8 1171L40.2 1175.2"/><path d="M34.4 1178.4H43.6M34.4 1182.6H43.6M34.4 1186.7H43.6" stroke-width="2.4"/></g><g fill="#707070"><rect x="181.1" y="1166.1" width="3.8" height="3.7"/><rect x="187.1" y="1166.1" width="18.8" height="3.7"/><rect x="181.1" y="1173.9" width="3.8" height="3.7"/><rect x="187.1" y="1173.9" width="18.8" height="3.7"/><rect x="181.1" y="1181.2" width="3.8" height="3.7"/><rect x="187.1" y="1181.2" width="18.8" height="3.7"/></g></svg>
<div class="t " style="top:1162.20px;font-size:21.5px;line-height:30px;height:30px;left:56.60px;color:#000;">调试信息</div>
<div class="t " style="top:1162.20px;font-size:21.5px;line-height:30px;height:30px;left:222.60px;color:#000;">问题</div>

</body>
</html>
